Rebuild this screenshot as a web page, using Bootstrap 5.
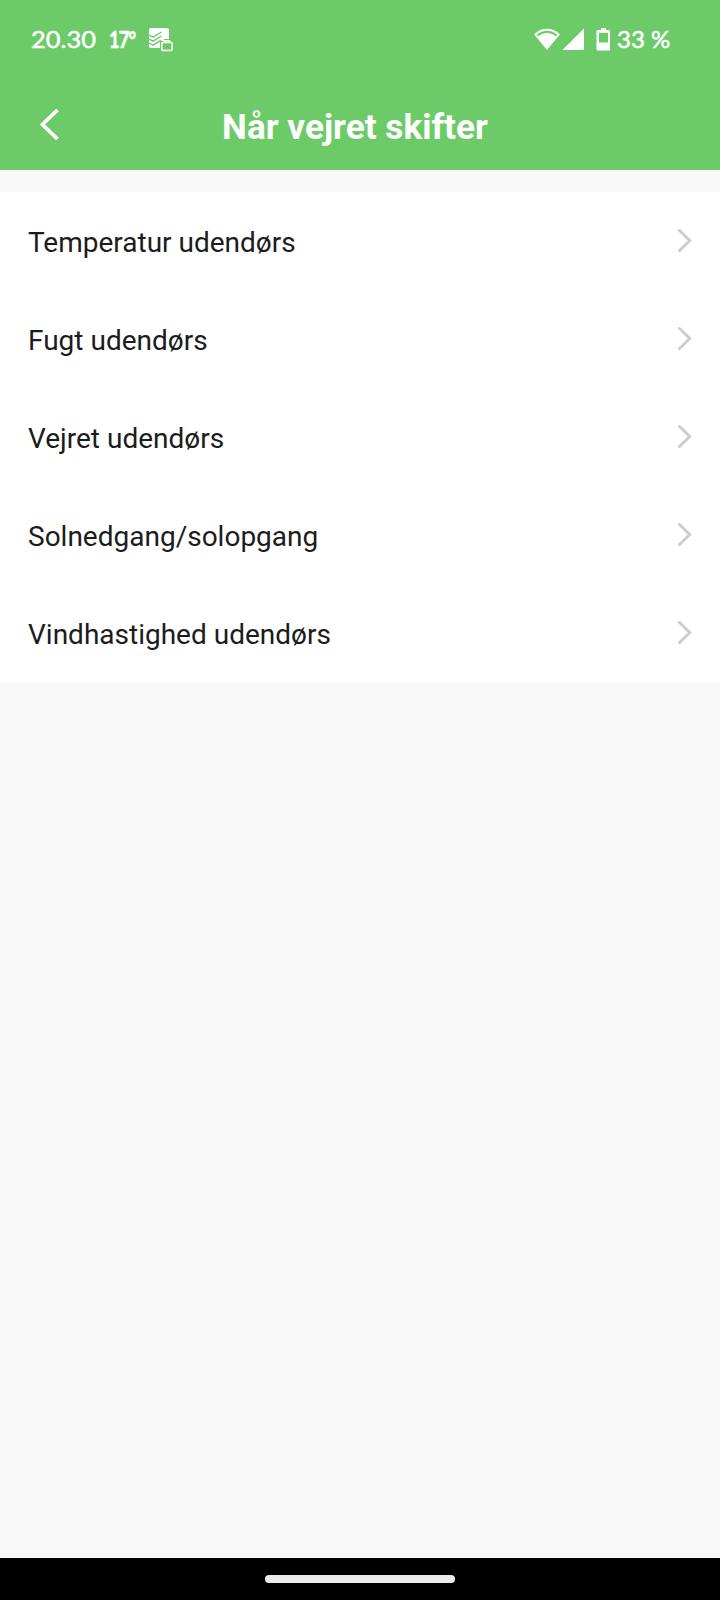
<!DOCTYPE html>
<html lang="da">
<head>
<meta charset="utf-8">
<meta name="viewport" content="width=device-width, initial-scale=1">
<title>Når vejret skifter</title>
<link href="https://cdn.jsdelivr.net/npm/bootstrap@5.3.0/dist/css/bootstrap.min.css" rel="stylesheet">
<style>
  body { background: #f8f8f8; font-family: Roboto, sans-serif; color: #1c1c1c; }
  .app-header { background: #6ccb68; height: 170px; color: #fff; margin-bottom: 22px; }
  .status-bar { height: 80px; padding: 0 50px 0 31px; font-family: Lato, sans-serif; font-size: 24px; line-height: 1; }
  .clock span, .temp span, .percent span { display: inline-block; white-space: nowrap; transform-origin: 0 50%; }
  .clock { width: 78px; padding-bottom: 2px; -webkit-text-stroke: .5px #fff; }
  .clock span { transform: scaleX(1.06); }
  .temp { width: 39px; font-size: 22px; padding-bottom: 1px; letter-spacing: -1px; -webkit-text-stroke: .6px #fff; }
  .temp span { transform: scaleX(.83); }
  .percent { width: 53px; margin-left: 5px; padding-bottom: 2px; -webkit-text-stroke: .5px #fff; }
  .title-bar { height: 90px; padding: 0 40px; }
  .title-bar h1 { font-size: 35.2px; line-height: 36px; padding: 3px 30px 0 0; }
  .menu-list .list-group-item { height: 98px; border: 0; padding: 4px 28px 0; font-size: 28px; color: #1c1c1c; line-height: 1; }
  .menu-list svg { margin-bottom: 3px; }
  .nav-strip { height: 42px; background: #000; }
  .nav-pill { width: 190px; height: 8px; background: #ebebeb; }
  svg { display: block; flex: none; }
</style>
</head>
<body class="min-vh-100 d-flex flex-column">
<header class="app-header">
  <div class="status-bar d-flex align-items-center">
    <div class="clock"><span>20.30</span></div>
    <div class="temp fw-bold"><span>17°</span></div>
    <svg width="26" height="26" viewBox="0 0 26 26" fill="none">
      <path fill="#fff" d="M3 1H19Q21 1 21 3V12H16V14H12V21H3Q1 21 1 19V3Q1 1 3 1Z"/>
      <path stroke="#6ccb68" stroke-width="1.4" d="M1 8L5 10.2L13.5 5M1 12L5 14.2L13.5 9M1 16L5 18.2L13 13.3"/>
      <path stroke="#fff" stroke-width="1.5" d="M15 15.5H23Q24.2 15.5 24.2 16.7V22.3Q24.2 23.5 23 23.5H15Q13.8 23.5 13.8 22.3V16.7Q13.8 15.5 15 15.5ZM16.5 15V13.8H21.5V15"/>
    </svg>
    <div class="ms-auto d-flex align-items-center">
      <svg width="78" height="26" viewBox="0 -1 78 26" fill="#fff">
        <path d="M0 6.2Q13 -4.6 26 6.2L13 22Z"/>
        <path d="M3.2 7.6Q13 -0.2 22.8 7.6" fill="none" stroke="#6ccb68" stroke-width="1.8"/>
        <path d="M28.5 22H50V.5Z"/>
        <path fill-rule="evenodd" d="M67 .2H72V2H74.5Q76 2 76 3.5V21Q76 22.5 74.5 22.5H64Q62.5 22.5 62.5 21V3.5Q62.5 2 64 2H67ZM65 4.8V14.5H74V4.8Z"/>
      </svg>
      <div class="percent"><span>33 %</span></div>
    </div>
  </div>
  <nav class="title-bar d-flex align-items-center">
    <svg width="20" height="32" viewBox="0 0 20 32" fill="none" stroke="#fff" stroke-width="3.8"><path d="M17.5 1L2.5 15.5L17.5 30"/></svg>
    <h1 class="flex-grow-1 text-center fw-bold mb-0">Når vejret skifter</h1>
  </nav>
</header>
<main class="flex-grow-1">
  <div class="menu-list list-group list-group-flush">
    <a href="#" class="list-group-item d-flex align-items-center justify-content-between">Temperatur udendørs<svg width="14" height="26" viewBox="0 0 14 26" fill="none" stroke="#ccc" stroke-width="2.8"><path d="M.5 .5L11.8 11.5L.5 22.5"/></svg></a>
    <a href="#" class="list-group-item d-flex align-items-center justify-content-between">Fugt udendørs<svg width="14" height="26" viewBox="0 0 14 26" fill="none" stroke="#ccc" stroke-width="2.8"><path d="M.5 .5L11.8 11.5L.5 22.5"/></svg></a>
    <a href="#" class="list-group-item d-flex align-items-center justify-content-between">Vejret udendørs<svg width="14" height="26" viewBox="0 0 14 26" fill="none" stroke="#ccc" stroke-width="2.8"><path d="M.5 .5L11.8 11.5L.5 22.5"/></svg></a>
    <a href="#" class="list-group-item d-flex align-items-center justify-content-between">Solnedgang/solopgang<svg width="14" height="26" viewBox="0 0 14 26" fill="none" stroke="#ccc" stroke-width="2.8"><path d="M.5 .5L11.8 11.5L.5 22.5"/></svg></a>
    <a href="#" class="list-group-item d-flex align-items-center justify-content-between">Vindhastighed udendørs<svg width="14" height="26" viewBox="0 0 14 26" fill="none" stroke="#ccc" stroke-width="2.8"><path d="M.5 .5L11.8 11.5L.5 22.5"/></svg></a>
  </div>
</main>
<footer class="nav-strip d-flex align-items-center justify-content-center"><div class="nav-pill rounded-pill"></div></footer>
<script src="https://cdn.jsdelivr.net/npm/bootstrap@5.3.0/dist/js/bootstrap.bundle.min.js"></script>
</body>
</html>
